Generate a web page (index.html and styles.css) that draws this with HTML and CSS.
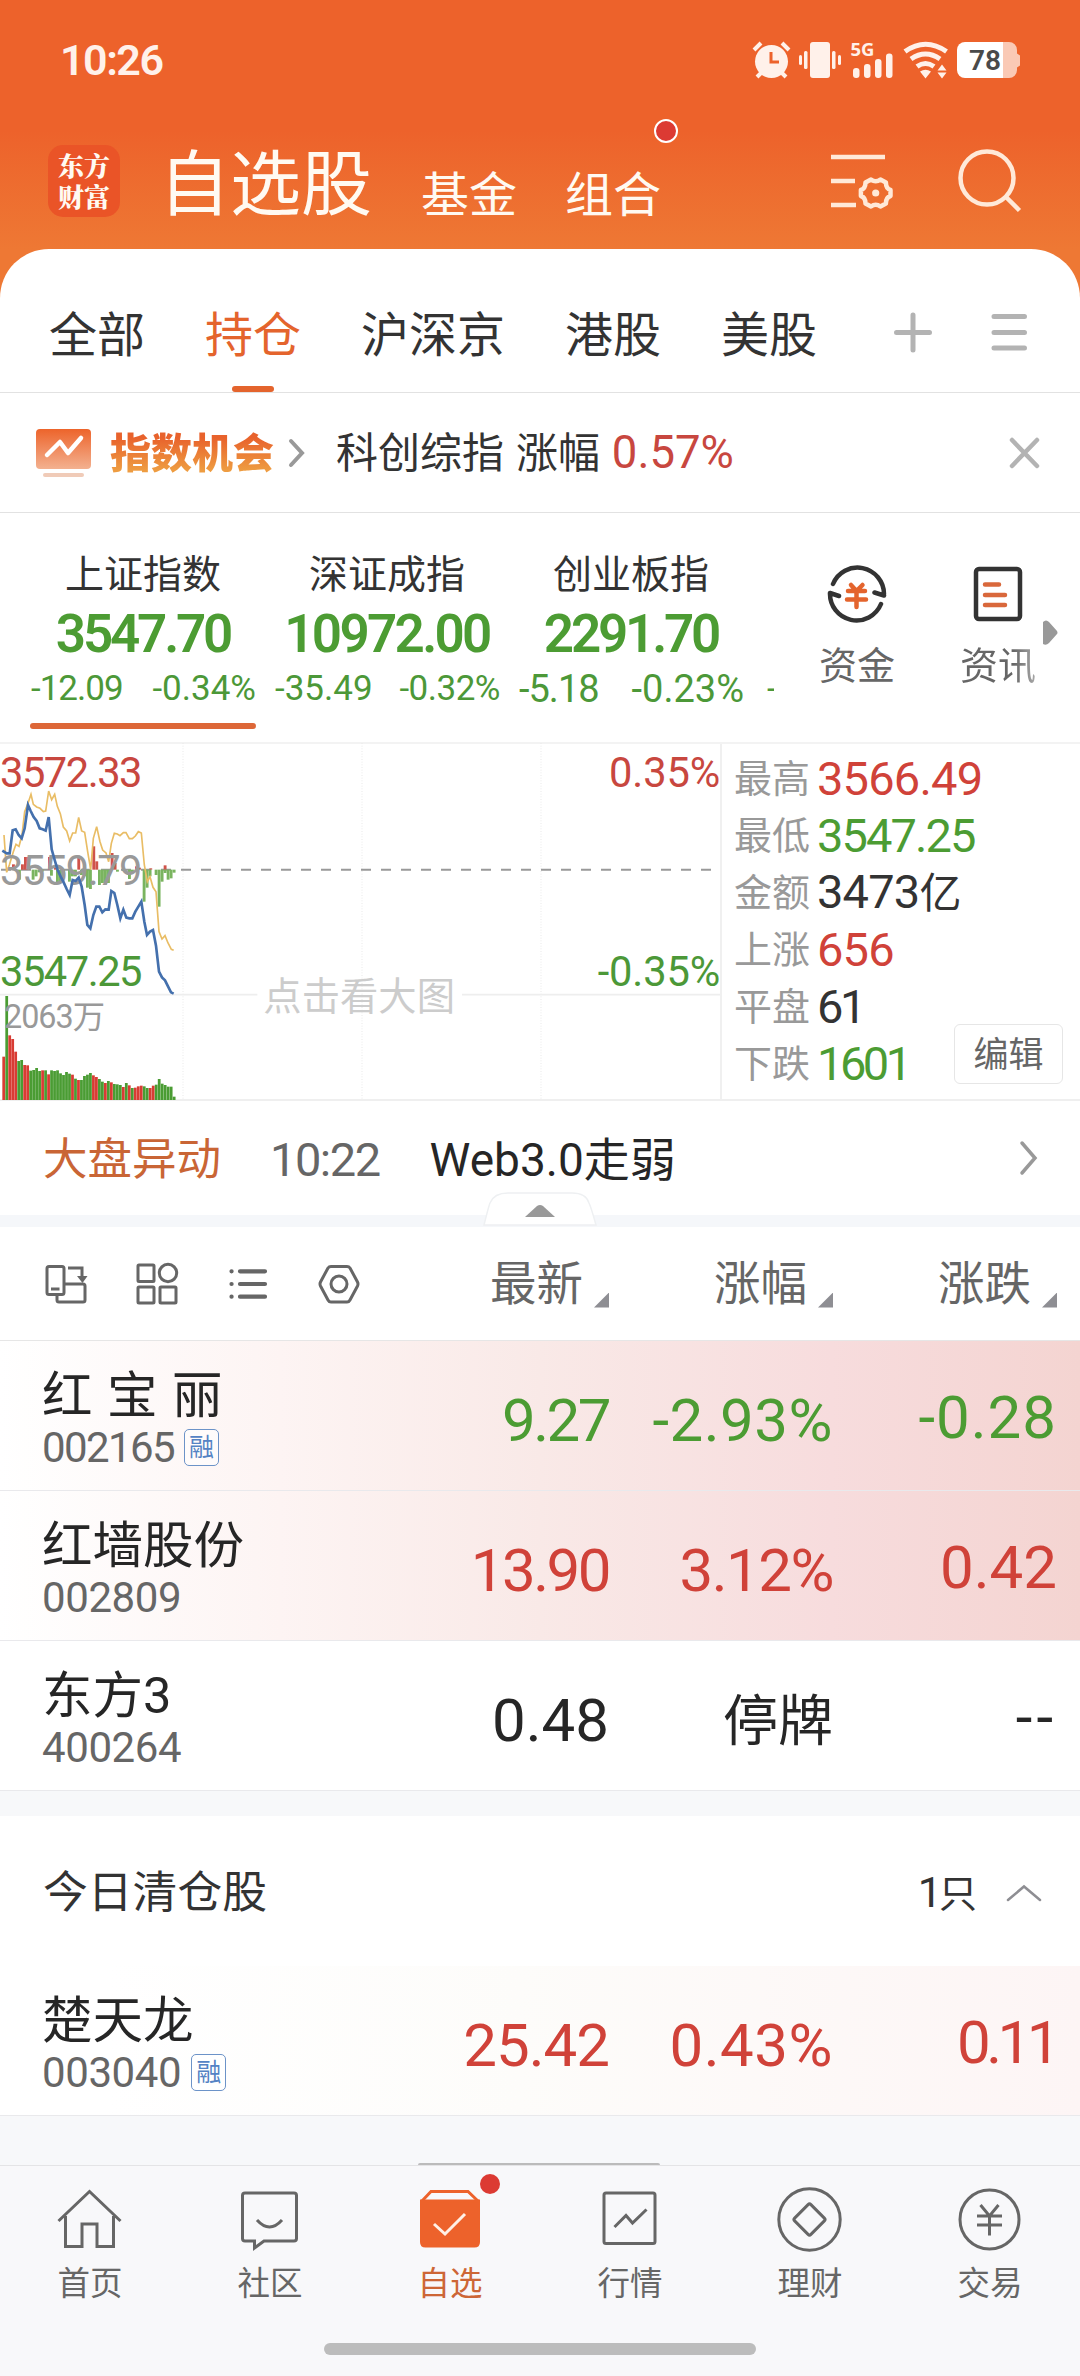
FILE: index.html
```html
<!DOCTYPE html>
<html lang="zh-CN">
<head>
<meta charset="utf-8">
<title>自选股</title>
<link rel="stylesheet" href="styles.css">
</head>
<body>
<div class="app">
  <header class="top">
    <div class="status">
      <span class="clock">10:26</span>
      <svg class="status-icons" width="270" height="50" viewBox="751 35 270 50" fill="#fff1ea">
        <circle cx="771.500" cy="61.500" r="16.500"/>
        <path d="M754 50l7-7M789 50l-7-7M757 77l5-5M786 77l-5-5" stroke="#fff1ea" stroke-width="4"/>
        <path d="M771 52v10h8" fill="none" stroke="#ed622b" stroke-width="3"/>
        <rect x="810" y="42" width="20" height="36" rx="3"/>
        <rect x="804" y="51" width="3.500" height="18" rx="1.500"/><rect x="832" y="51" width="3.500" height="18" rx="1.500"/>
        <rect x="799" y="55" width="3" height="10" rx="1.500"/><rect x="838" y="55" width="3" height="10" rx="1.500"/>
        <text x="850.500" y="56" class="net">5G</text>
        <rect x="853" y="68" width="6.500" height="10" rx="3"/><rect x="864" y="64" width="6.500" height="14" rx="3"/>
        <rect x="875" y="59" width="6.500" height="19" rx="3"/><rect x="886" y="53.500" width="6.500" height="24.500" rx="3"/>
        <g fill="none" stroke="#fff1ea" stroke-width="5"><path d="M905 51.500Q925.500 37 946.500 51.500"/><path d="M911 59Q925.500 49 940 59"/><path d="M917 66.500Q925.500 60.500 934 66.500"/></g>
        <path d="M920 71.500q5.500-3.500 11 0l-5.500 7zM937.500 70.500l4.500-6 4.500 6zM937.500 72.500l4.500 6 4.500-6z"/>
        <path d="M1002 42h7a8 8 0 0 1 8 8v3.500l3 2v10l-3 2v2.500a8 8 0 0 1-8 8h-7z" opacity=".72"/>
        <path d="M965 42h38v36h-38a8 8 0 0 1-8-8v-20a8 8 0 0 1 8-8z" fill="#fff"/>
        <text x="969" y="70" class="batt">78</text>
      </svg>
    </div>
    <div class="title-bar">
      <div class="logo"><span>东方</span><span>财富</span></div>
      <h1>自选股</h1>
      <span class="sub-title">基金</span>
      <span class="sub-title combo">组合<i class="red-dot"></i></span>
      <svg class="title-icons" width="192" height="72" viewBox="830 145 192 72" fill="none" stroke="#ffe9d8" stroke-width="4.500">
        <path d="M831 157h54M831 181h24M831 205h25"/>
        <circle cx="875.700" cy="193" r="3.600" fill="#ffe9d8" stroke="none"/>
        <path stroke-linejoin="round" d="M871 179.500q4.700 3.500 9.400 0l5.500 3q0 6 4.600 7.500v6q-4.600 1.500-4.600 7.500l-5.500 3q-4.700-3.500-9.400 0l-5.500-3q0-6-4.600-7.500v-6q4.600-1.500 4.600-7.500z"/>
        <circle cx="987" cy="178" r="26.500"/><path d="M1006 197l13.500 13.500"/>
      </svg>
    </div>
  </header>

  <main class="sheet">
    <nav class="tabs">
      <span>全部</span><span class="on">持仓</span><span>沪深京</span><span>港股</span><span>美股</span>
      <svg class="tab-icons" width="136" height="44" viewBox="892 310 136 44" stroke="#b3b3b3" stroke-width="5" stroke-linecap="round" fill="none">
        <path d="M895.500 332.500h33M912 315v35M993 316.500h30.500M993 332.500h30.500M993 348h30.500"/>
      </svg>
    </nav>

    <section class="promo">
      <svg width="56" height="50" viewBox="36 428 56 50">
        <defs><linearGradient id="card" x2="0" y2="1"><stop stop-color="#ed642b"/><stop offset="1" stop-color="#f3b190"/></linearGradient></defs>
        <rect x="36" y="429" width="55" height="40" rx="4" fill="url(#card)"/>
        <rect x="43" y="473" width="41" height="4" rx="2" fill="#f0cbb8"/>
        <path d="M47 455l13-13 8 11 13-15" fill="none" stroke="#fff" stroke-width="4.500" stroke-linecap="round" stroke-linejoin="round"/>
      </svg>
      <b class="promo-name">指数机会</b>
      <svg class="promo-arrow" width="18" height="30" viewBox="0 0 18 30"><path d="M3 3l11 12-11 12" fill="none" stroke="#999" stroke-width="4" stroke-linecap="round"/></svg>
      <span class="promo-text">科创综指 涨幅 <em>0.57%</em></span>
      <svg class="promo-close" width="32" height="32" viewBox="0 0 32 32"><path d="M3 3l25 26M28 3L3 29" stroke="#b3b3b3" stroke-width="4.500" stroke-linecap="round"/></svg>
    </section>

    <section class="indices">
      <div class="index-list">
        <div class="index on"><p class="iname">上证指数</p><p class="ival">3547.70</p><p class="isub"><span class="t1">-12.09</span><span>-0.34%</span></p></div>
        <div class="index"><p class="iname">深证成指</p><p class="ival wide">10972.00</p><p class="isub"><span>-35.49</span><span class="t2">-0.32%</span></p></div>
        <div class="index"><p class="iname">创业板指</p><p class="ival">2291.70</p><p class="isub big"><span class="t3">-5.18</span><span>-0.23%</span></p></div>
        <div class="index"><p class="iname">&nbsp;</p><p class="ival">&nbsp;</p><p class="isub next"><span>-</span></p></div>
      </div>
      <div class="quick">
        <div class="q">
          <svg width="60" height="60" viewBox="826 564 60 60" fill="none" stroke="#333" stroke-width="4.500" stroke-linecap="round">
            <path d="M832 584a26.500 26.500 0 0 1 51 10M883 595.500l-9.500-3"/><path d="M880 604a26.500 26.500 0 0 1-51-11M829 593l9 3"/>
            <path d="M850 585l5.500 6 6-6M847 591h17M846 599.500h19M855.500 590v17" stroke="#e4642d"/>
          </svg><span>资金</span>
        </div>
        <div class="q">
          <svg width="60" height="60" viewBox="967 564 60 60" fill="none" stroke="#333" stroke-width="4.500" stroke-linecap="round">
            <rect x="975" y="569" width="44" height="50" rx="3"/><path d="M984 584.500h14M984 595h20M984 605h20" stroke="#d9683b"/>
          </svg><span class="fade">资讯</span>
        </div>
      </div>
      <svg class="more" width="16" height="26" viewBox="0 0 16 26"><path d="M1 2q3-3 6 0l8 9q1 2 0 3l-8 9q-3 3-6 1z" fill="#999"/></svg>
    </section>

    <section class="market">
      <svg id="chart" class="chart" width="720" height="358" viewBox="0 21 2160 1074" preserveAspectRatio="none">
        <g stroke="#e9e9e9" stroke-width="3" stroke-dasharray="3 5"><path d="M549 24V1095M1086 24V1095M1623 24V1095"/></g>
        <path d="M0 779H772M1386 779H2160" stroke="#eee" stroke-width="5"/>
        <path d="M3 404H2160" stroke="#999" stroke-width="6" stroke-dasharray="30 30"/>
        <g id="flow"></g>
        <polyline points="12,300 20,412 28,390 40,350 48,328 57,334 66,300 74,230 84,205 93,178 100,208 110,216 120,220 130,230 137,228 146,168 155,194 164,178 172,214 181,236 190,276 200,288 209,318 218,294 227,294 236,247 245,288 254,292 263,350 272,404 280,310 290,275 300,320 308,345 318,354 326,380 334,325 343,295 352,297 360,302 370,293 378,293 388,311 397,311 406,303 415,290 424,294 433,390 442,440 450,425 459,457 468,470 477,590 486,612 495,602 504,624 514,643 521,646" fill="none" stroke="#e9bd65" stroke-width="5"/>
        <text x="0" y="451" class="c-txt mid">3559.79</text>
        <polyline points="7,347 20,355 29,355 38,286 47,283 56,300 65,310 74,280 84,210 92,228 101,246 110,258 119,280 128,283 137,287 146,246 155,343 164,375 173,405 182,425 190,440 200,462 209,480 218,435 227,438 236,428 245,455 254,510 262,570 271,580 280,540 289,515 298,515 307,532 316,523 326,524 334,468 343,474 352,510 361,550 370,524 379,548 388,550 397,550 406,530 415,515 424,500 433,560 441,600 450,590 459,585 468,632 477,710 486,727 495,736 504,754 513,772 521,776" fill="none" stroke="#4470ad" stroke-width="8"/>
        <text x="0" y="155" class="c-txt red">3572.33</text>
        <text x="0" y="752" class="c-txt green">3547.25</text>
        <text x="2160" y="155" class="c-txt pct red">0.35%</text>
        <text x="2160" y="752" class="c-txt pct green">-0.35%</text>
        <g id="volume"></g>
        <text x="12" y="879" class="c-vol">2063万</text>
        <text x="790" y="825" class="c-tip">点击看大图</text>
      </svg>
      <dl class="stats">
        <div><dt>最高</dt><dd class="red">3566.49</dd></div>
        <div><dt>最低</dt><dd class="green tight">3547.25</dd></div>
        <div><dt>金额</dt><dd>3473<small>亿</small></dd></div>
        <div><dt>上涨</dt><dd class="red">656</dd></div>
        <div><dt>平盘</dt><dd class="tight2">61</dd></div>
        <div><dt>下跌</dt><dd class="green tight2">1601</dd></div>
        <button class="edit">编辑</button>
      </dl>
    </section>

    <section class="news">
      <b>大盘异动</b><time>10:22</time><span>Web3.0走弱</span>
      <svg width="20" height="36" viewBox="0 0 20 36"><path d="M3 3l13 15L3 33" fill="none" stroke="#999" stroke-width="3.500" stroke-linecap="round"/></svg>
    </section>
    <div class="band">
      <svg class="handle" width="114" height="36" viewBox="0 0 114 36"><path d="M1 34Q6 14 7 12 11 2 25 2H89Q103 2 106 12 108 16 113 34Z" fill="#fff" stroke="#eef0f2" stroke-width="1.500"/><path d="M42 26l12-11q3-2 6 0l12 11z" fill="#999"/></svg>
    </div>

    <section class="cols">
      <svg class="tools" width="320" height="46" viewBox="42 1261 320 46" fill="none" stroke="#666" stroke-width="3">
        <rect x="47" y="1266.500" width="17" height="28" rx="2"/><path d="M51 1289h8.500M57 1296v4q0 2 2 2h24q2 0 2-2v-14q0-2-2-2h-18M68 1268h14v12"/><path d="M77 1276h10.500l-5 7z" fill="#666" stroke="none"/>
        <rect x="138" y="1265" width="16" height="16.500" rx="1"/><circle cx="168" cy="1273" r="8.700"/><rect x="138" y="1287" width="16" height="16" rx="1"/><rect x="160" y="1287" width="16" height="16" rx="1"/>
        <path d="M240 1271.300h25M240 1284h25M240 1296.700h25M231.500 1271.300h.1M231.500 1284h.1M231.500 1296.700h.1" stroke-width="4.200" stroke-linecap="round"/>
        <path d="M331 1266.500h16q2 0 3 1.500l7.500 14q1 2 0 4l-7.500 14q-1 2-3 2h-16q-2 0-3-2l-7.500-14q-1-2 0-4l7.500-14q1-1.500 3-1.500z"/><circle cx="339" cy="1284" r="8"/>
      </svg>
      <span class="h">最新</span><span class="h">涨幅</span><span class="h">涨跌</span>
    </section>

    <div class="row hot">
      <div class="stock"><b class="spaced">红 宝 丽</b><p><span class="n1">002165</span><i>融</i></p></div>
      <span class="v green k7">9.27</span><span class="v green kp">-2.93%</span><span class="v green last km">-0.28</span>
    </div>
    <div class="row hot">
      <div class="stock"><b>红墙股份</b><p><span>002809</span></p></div>
      <span class="v red k1">13.90</span><span class="v red k2">3.12%</span><span class="v red last">0.42</span>
    </div>
    <div class="row">
      <div class="stock"><b>东方3</b><p><span>400264</span></p></div>
      <span class="v">0.48</span><span class="v halt">停牌</span><span class="v last dash">--</span>
    </div>
    <div class="gap"></div>
    <section class="cleared"><span>今日清仓股</span><span class="count"><em>1</em>只</span>
      <svg width="38" height="20" viewBox="0 0 38 20"><path d="M3 17L19 3.500 35 17" fill="none" stroke="#8e8e93" stroke-width="2.500" stroke-linecap="round"/></svg>
    </section>
    <div class="row warm">
      <div class="stock"><b>楚天龙</b><p><span>003040</span><i>融</i></p></div>
      <span class="v red k3">25.42</span><span class="v red kp">0.43%</span><span class="v red last k4">0.11</span>
    </div>
    <div class="rest"><i></i></div>
  </main>

  <footer class="dock">
    <div class="dock-items">
      <a><svg width="66" height="66" viewBox="57 2187 66 66"><path d="M58.500 2221L89.500 2191.500 120.500 2221M65.500 2216v30.500h16.500v-22.500h15v22.500h16.500V2216"/></svg>首页</a>
      <a><svg width="66" height="66" viewBox="237 2187 66 66"><path d="M245 2193h49q2.500 0 2.500 2.500v43q0 2.500-2.500 2.500h-30l-9.500 7v-7h-9.500q-2.500 0-2.500-2.500v-43q0-2.500 2.500-2.500zM257 2220q12.500 14 25 0"/></svg>社区</a>
      <a class="on"><svg width="66" height="66" viewBox="417 2187 66 66"><path d="M422 2201l9-9.500h37l10 9.500" /><path d="M421.500 2201h57v41q0 4-4 4h-49q-4 0-4-4z" fill="#ed622b"/><path d="M434 2224l11 10 20-20" class="tick"/></svg>自选<i class="dot"></i></a>
      <a><svg width="66" height="66" viewBox="597 2187 66 66"><rect x="604" y="2193" width="51" height="50.500" rx="2"/><path d="M614.500 2227l11.500-11.500 6.500 7.500 14-13.500"/></svg>行情</a>
      <a><svg width="66" height="66" viewBox="777 2187 66 66"><circle cx="809.500" cy="2219.500" r="30.700"/><rect x="798" y="2208" width="23" height="23" rx="2" transform="rotate(45 809.500 2219.500)"/></svg>理财</a>
      <a><svg width="66" height="66" viewBox="957 2187 66 66"><circle cx="989.500" cy="2219.500" r="29.500"/><path d="M980.500 2205l9 11 9-11M977 2216h25M977 2225h25M989.500 2215v20.500"/></svg>交易</a>
    </div>
    <div class="home-bar"></div>
  </footer>
</div>
<script src="chart.js"></script>
</body>
</html>
```
FILE: chart.js
```js
const NS = "http://www.w3.org/2000/svg";
const RED = "#d83c34", GREEN = "#4a9c33";

function bar(group, x, y, h, color, w) {
  const r = document.createElementNS(NS, "rect");
  r.setAttribute("x", x);
  r.setAttribute("y", y);
  r.setAttribute("width", w);
  r.setAttribute("height", h);
  r.setAttribute("fill", color);
  group.appendChild(r);
}

// Volume: top edge of each bar, first letter is the colour
const volume = ("R965 G783 R901 R912 R950 G978 G975 R990 R991 G1007 G1005 G999 G1008 R1006 G1006 R1018 " +
  "G1006 G1008 G1006 G1015 G1020 G1011 G1016 R1019 G1031 R1035 G1035 G1023 G1019 G1014 R1021 R1026 " +
  "G1032 G1040 R1044 G1038 R1042 G1047 G1048 G1050 R1056 G1044 R1051 G1059 R1058 R1054 R1052 G1054 " +
  "G1059 R1059 R1052 G1049 G1032 G1046 G1050 G1055 G1055 G1085").split(" ");
const vg = document.getElementById("volume");
volume.forEach((v, i) => {
  const top = Number(v.slice(1));
  bar(vg, 7 + i * 8.97, top, 1095 - top, v[0] === "R" ? RED : GREEN, 8.3);
});

// Net flow around the zero line: [x, delta]
const flow = [[36, -16], [63, -16], [72, -38], [81, -38], [144, -38], [162, -10], [232, -42], [277, -70], [286, -25],
  [332, -50], [341, -20], [405, -10], [414, -6], [448, -4], [491, -13], [54, 30], [95, 30], [104, 20], [113, 8],
  [122, 6], [150, 18], [168, 40], [177, 40], [186, 20], [204, 36], [213, 20], [222, 20], [240, 16], [249, 20],
  [258, 54], [267, 58], [294, 46], [303, 40], [312, 44], [321, 40], [348, 6], [366, 4], [384, 28], [393, 10],
  [428, 96], [437, 54], [446, 20], [464, 16], [473, 111], [482, 36], [491, 10], [500, 30], [509, 26], [518, 9]];
const fg = document.getElementById("flow");
flow.forEach(([x, d]) => bar(fg, x, d < 0 ? 404 + d : 404, Math.abs(d), d < 0 ? "#cf534b" : "#7ab45f", 8.6));
```
FILE: styles.css
```css
* { box-sizing: border-box; margin: 0; padding: 0; }
body { width: 1080px; background: #f7f8fa; color: #333; font-family: Roboto, "Noto Sans CJK SC", sans-serif; }
em, i { font-style: normal; }
svg { display: block; flex: none; }
.app { display: flex; flex-direction: column; width: 1080px; height: 2376px; overflow: hidden; background: linear-gradient(#ed622b 0 130px, #ee7834 249px); }
.red { color: #d04239; fill: #c8473f; }
.green { color: #4c9c33; fill: #4c9838; }

/* header */
.top { height: 249px; color: #fffaf2; }
.status { display: flex; justify-content: space-between; align-items: center; height: 120px; padding: 0 59px 0 60px; }
.clock { font-size: 43px; font-weight: 600; letter-spacing: -1.500px; color: #fff1ea; }
.net { font: 700 18.500px "Noto Sans", sans-serif; }
.batt { font: 600 28px Roboto, sans-serif; fill: #4a4a4a; }
.title-bar { display: flex; align-items: flex-start; padding: 25px 58px 0 48px; }
.logo { display: flex; flex-direction: column; width: 72px; height: 72px; border-radius: 15px; background: #ea5427; font: 900 26px/31px "Noto Serif CJK SC", "Noto Sans CJK SC", sans-serif; text-align: center; padding-top: 4px; }
.title-bar h1 { margin-left: 39px; font-size: 71px; line-height: 72px; font-weight: 400; padding-top: 4px; }
.sub-title { margin: 15px 0 0 49px; font-size: 48px; line-height: 72px; }
.sub-title.combo { margin-left: 48px; }
.combo { position: relative; }
.red-dot { position: absolute; left: 89px; top: -41px; width: 24px; height: 24px; border-radius: 50%; background: #dc3a33; border: 2px solid #fff; }
.title-icons { margin-left: auto; }

/* tabs */
.sheet { display: flex; flex-direction: column; flex: 1; background: #fff; border-radius: 49px 49px 0 0; overflow: hidden; }
.tabs { display: flex; height: 144px; padding: 0 51px 0 49px; border-bottom: 1px solid #e2e2e2; font-size: 48px; line-height: 173px; }
.tabs span { margin-right: 60px; }
.tabs .on { color: #e4642d; display: flex; flex-direction: column; align-items: center; }
.tabs .on::after { content: ""; width: 42px; height: 6px; margin-top: -36px; border-radius: 3px; background: #e4642d; }
.tab-icons { margin: 61px 0 0 auto; }

/* promo */
.promo { display: flex; align-items: center; height: 120px; padding: 0 39px 0 36px; border-bottom: 1px solid #e2e2e2; }
.promo-name { margin-left: 18px; padding-top: 2px; font-size: 41px; font-weight: 900; line-height: 60px; background: linear-gradient(#e8622c 25%, #ee9c41 78%); -webkit-background-clip: text; background-clip: text; color: transparent; }
.promo-arrow { margin-left: 14px; }
.promo-text { margin-left: 30px; padding-top: 2px; font-size: 42px; line-height: 60px; white-space: pre; word-spacing: 1.500px; }
.promo-text em { color: #c8473f; font-size: 45.500px; }
.promo-close { margin-left: auto; }

/* indices */
.indices { display: flex; height: 229px; }
.index-list { display: flex; gap: 18px; width: 774px; padding: 37px 0 0 30px; overflow: hidden; }
.index { flex: none; width: 226px; text-align: center; }
.iname { font-size: 39px; line-height: 50px; }
.ival { margin-top: 9px; font-size: 53px; font-weight: 600; line-height: 50px; letter-spacing: -3.200px; color: #4c9c33; }
.ival.wide { letter-spacing: -2.700px; }
.isub { display: flex; justify-content: space-between; margin-top: 10px; padding: 0 0 0 1px; font-size: 35px; line-height: 40px; color: #4c9838; }
.isub.big { font-size: 38px; }
.isub.next { padding-left: 5px; }
.t1, .t3 { letter-spacing: -1px; }
.t2 { letter-spacing: -.5px; }
.index.on::after { content: ""; display: block; height: 6px; margin-top: 14px; border-radius: 3px; background: #dd6738; }
.quick { display: flex; gap: 65px; padding: 51px 0 0 45px; }
.q { display: flex; flex-direction: column; align-items: center; width: 76px; font-size: 38px; line-height: 50px; color: #666; white-space: nowrap; }
.q span { margin-top: 17px; }
.q .fade { background: linear-gradient(90deg, #666 70%, #aaa); -webkit-background-clip: text; background-clip: text; color: transparent; }
.more { margin: 107px 0 0 6px; }

/* market */
.market { display: flex; height: 359px; border-top: 2px solid #f3f3f3; border-bottom: 2px solid #efefef; }
.chart { margin-top: -2px; }
.c-txt { font: 125px Roboto, sans-serif; letter-spacing: -4.500px; }
.c-txt.mid { fill: #999; }
.c-txt.pct { text-anchor: end; letter-spacing: -.5px; }
.c-vol { font: 97px Roboto, "Noto Sans CJK SC", sans-serif; letter-spacing: -3px; fill: #999; }
.c-tip { font: 115px "Noto Sans CJK SC", sans-serif; fill: #ccc; }
.stats { position: relative; flex: 1; padding: 6px 0 0 12px; border-left: 2px solid #f0f0f0; }
.stats div { display: flex; align-items: center; height: 57px; line-height: 57px; }
.stats dt { width: 83px; padding-top: 1px; font-size: 38px; color: #999; }
.stats dd { font-size: 47px; letter-spacing: -.8px; }
.stats .tight { letter-spacing: -1.900px; }
.stats .tight2 { letter-spacing: -3.500px; }
.stats small { font-size: 42px; }
.edit { position: absolute; right: 17px; bottom: 15px; width: 109px; height: 60px; border: 1px solid #e6e6e6; border-radius: 6px; background: #fff; font: 35px/60px Roboto, "Noto Sans CJK SC", sans-serif; color: #666; text-align: center; padding-top: 1px; }

/* news */
.news { display: flex; align-items: center; height: 114px; padding: 0 41px 0 43px; font-size: 44px; line-height: 60px; color: #262626; }
.news b { font-weight: 400; padding-top: 3px; color: #c96535; font-size: 44.500px; }
.news time { margin-left: 49px; padding-top: 3px; font-size: 47px; letter-spacing: -1.500px; color: #666; }
.news span { margin-left: 50px; padding-top: 3px; font-size: 46px; }
.news svg { margin-left: auto; }
.band { position: relative; height: 12px; background: #f5f7fa; }
.handle { position: absolute; left: 483px; bottom: 0; }

/* columns */
.cols { display: grid; grid-template-columns: 341px repeat(3, 224px); height: 114px; padding-left: 42px; align-items: center; border-bottom: 1px solid #e6e6e6; color: #666; }
.h { display: flex; justify-content: flex-end; padding-right: 2px; font-size: 46.500px; line-height: 60px; }
.h::after { content: ""; width: 15px; height: 15px; margin: 39px -4px 0 11px; background: #8e8e93; clip-path: polygon(100% 0, 100% 100%, 0 100%); }

/* stock rows */
.row { display: grid; grid-template-columns: 343px repeat(3, 224px); height: 150px; padding-left: 42px; border-bottom: 1px solid #e9e9ec; }
.hot { background: linear-gradient(90deg, #fff, #fdf4f3 26%, #f9e9e7 50%, #f7dcdd 77%, #f4d4d1); }
.warm { background: linear-gradient(90deg, #fff 10%, #fdfcfa 48%, #fdf5f5); }
.stock { padding: 25px 0 0 0; color: #262626; }
.stock b { display: block; font-size: 50.500px; font-weight: 400; line-height: 60px; white-space: nowrap; }
.stock .spaced { word-spacing: 2px; }
.stock p { display: flex; align-items: center; gap: 10px; height: 42px; font-size: 42px; color: #666; letter-spacing: -.4px; }
.stock .n1 { letter-spacing: -1.600px; }
.stock i { width: 35px; height: 37px; border: 1px solid #6c93c8; border-radius: 5px; background: #fff8; color: #5583c4; font-size: 25px; line-height: 35px; text-align: center; letter-spacing: 0; }
.v { padding-top: 8px; font-size: 60px; line-height: 144px; text-align: right; white-space: nowrap; color: #262626; }
.v.last { padding-top: 5px; }
.v.red { color: #d04239; }
.v.green { color: #4c9c33; }
.k7 { letter-spacing: -2.500px; }
.k1 { letter-spacing: -2.500px; }
.k2 { letter-spacing: -1.500px; }
.k3 { letter-spacing: -1px; }
.kp { letter-spacing: .5px; }
.k4 { letter-spacing: -4.500px; padding-right: 1px; }
.km { letter-spacing: 1px; }
.v.halt { font-size: 55px; }
.v.dash { letter-spacing: 4px; }
.gap { height: 25px; background: #f7f8fa; }
.cleared { display: flex; align-items: center; height: 150px; padding: 4px 37px 0 43px; font-size: 44.800px; line-height: 60px; }
.count { margin-left: auto; font-size: 38px; }
.count em { font-size: 43px; margin-right: -3px; }
.cleared svg { margin-left: 28px; }
.rest { flex: 1; display: flex; align-items: flex-end; padding-left: 418px; background: #f7f8fa; }
.rest i { width: 242px; height: 2px; background: #bbb; border-radius: 2px 2px 0 0; }

/* dock */
.dock { height: 211px; border-top: 1px solid #e4e4e6; background: #f8f8fa; }
.dock-items { display: flex; height: 177px; }
.dock a { position: relative; width: 180px; padding-top: 21px; display: flex; flex-direction: column; align-items: center; font-size: 32.500px; line-height: 44px; color: #666; }
.dock svg { margin-bottom: 9px; fill: none; stroke: #666; stroke-width: 3; }
.dock .on { color: #cd6636; }
.dock .on svg { stroke: #ed622b; }
.dock .tick { stroke: #fff0e6; }
.dot { position: absolute; left: 120px; top: 8px; width: 20px; height: 20px; border-radius: 50%; background: #dc3a33; }
.home-bar { width: 432px; height: 12px; margin: 0 auto; border-radius: 6px; background: #bcbcbc; }
```
